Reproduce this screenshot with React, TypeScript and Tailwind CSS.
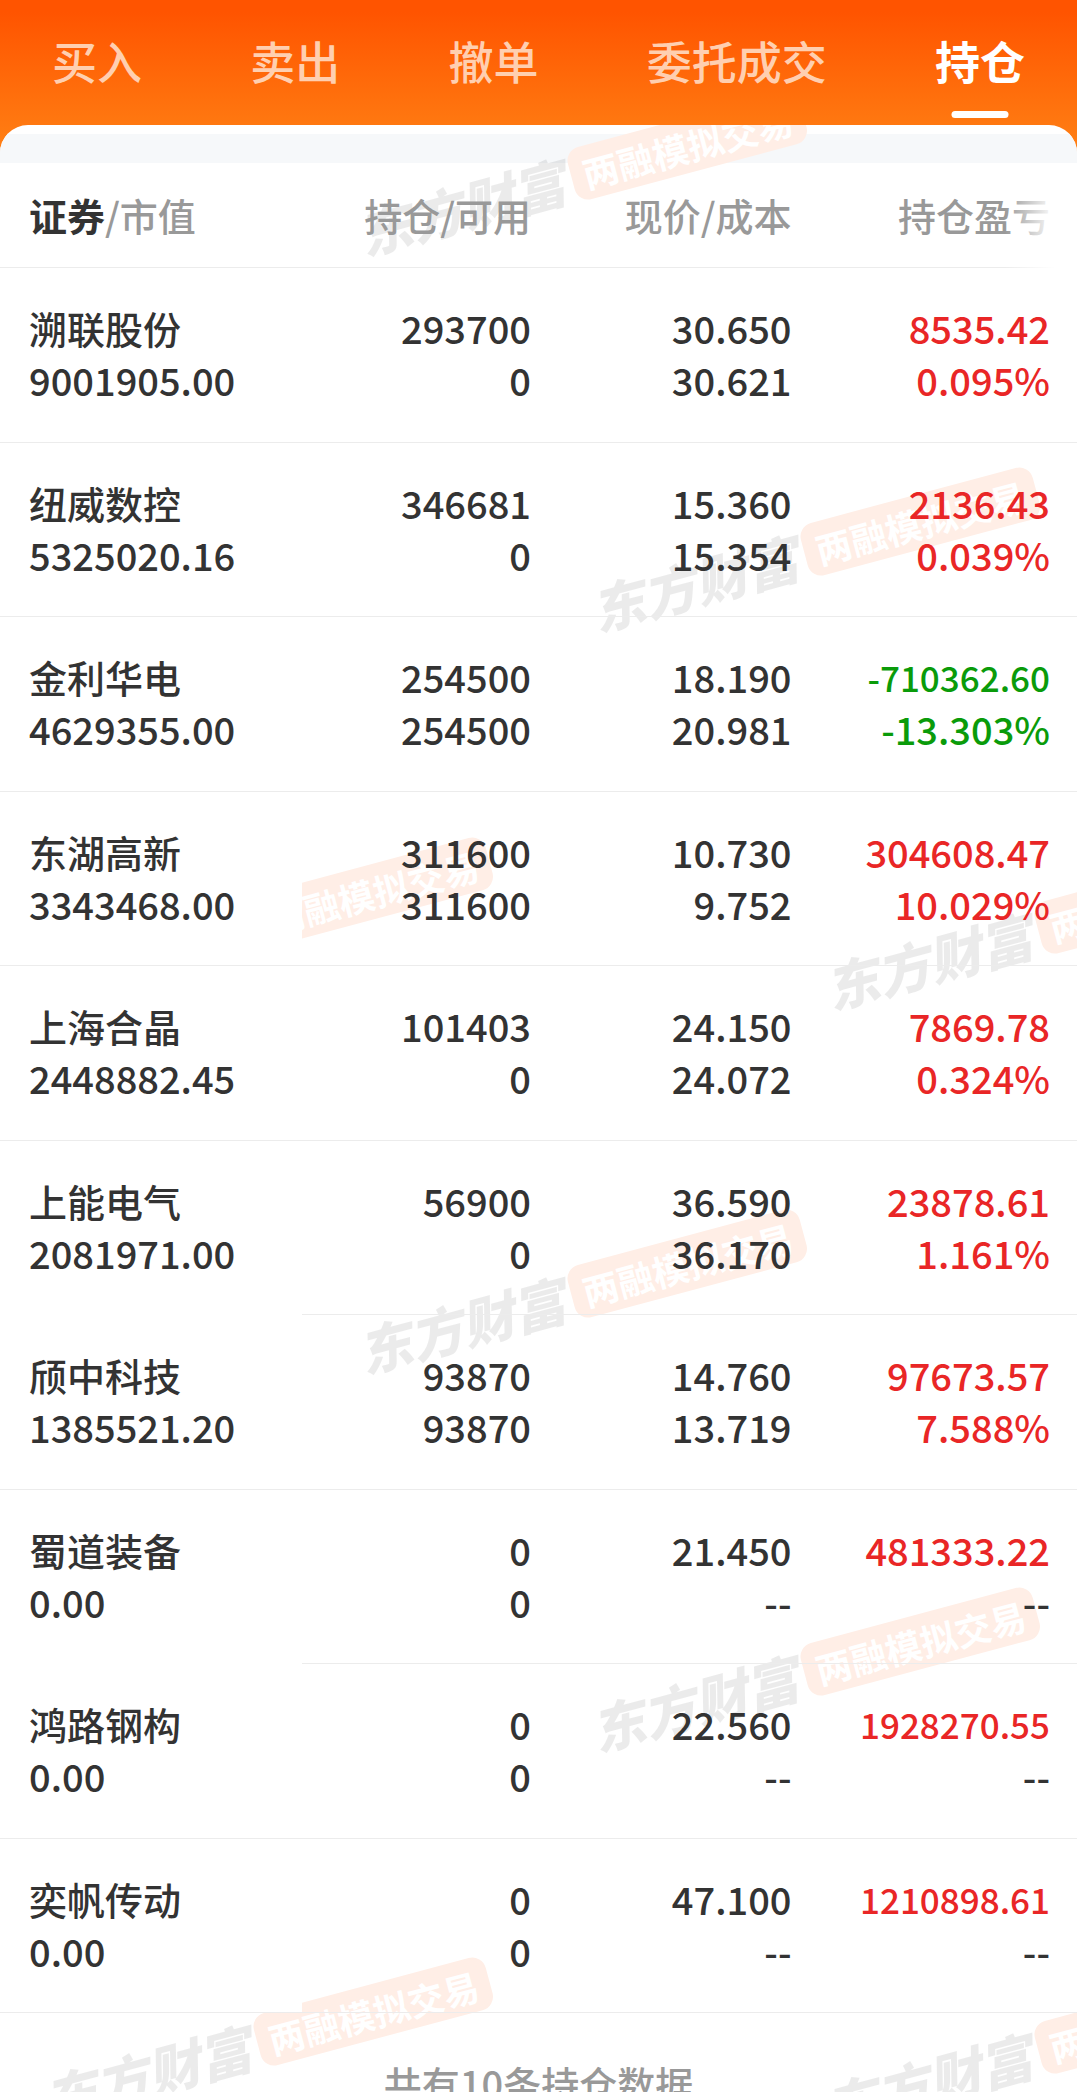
import React from "react";

const tabs = ["买入", "卖出", "撤单", "委托成交", "持仓"];

type Holding = {
  name: string;
  value: string;
  held: string;
  available: string;
  price: string;
  cost: string;
  profit: string;
  rate: string;
};

const holdings: Holding[] = [
  { name: "溯联股份", value: "9001905.00", held: "293700", available: "0", price: "30.650", cost: "30.621", profit: "8535.42", rate: "0.095%" },
  { name: "纽威数控", value: "5325020.16", held: "346681", available: "0", price: "15.360", cost: "15.354", profit: "2136.43", rate: "0.039%" },
  { name: "金利华电", value: "4629355.00", held: "254500", available: "254500", price: "18.190", cost: "20.981", profit: "-710362.60", rate: "-13.303%" },
  { name: "东湖高新", value: "3343468.00", held: "311600", available: "311600", price: "10.730", cost: "9.752", profit: "304608.47", rate: "10.029%" },
  { name: "上海合晶", value: "2448882.45", held: "101403", available: "0", price: "24.150", cost: "24.072", profit: "7869.78", rate: "0.324%" },
  { name: "上能电气", value: "2081971.00", held: "56900", available: "0", price: "36.590", cost: "36.170", profit: "23878.61", rate: "1.161%" },
  { name: "颀中科技", value: "1385521.20", held: "93870", available: "93870", price: "14.760", cost: "13.719", profit: "97673.57", rate: "7.588%" },
  { name: "蜀道装备", value: "0.00", held: "0", available: "0", price: "21.450", cost: "--", profit: "481333.22", rate: "--" },
  { name: "鸿路钢构", value: "0.00", held: "0", available: "0", price: "22.560", cost: "--", profit: "1928270.55", rate: "--" },
  { name: "奕帆传动", value: "0.00", held: "0", available: "0", price: "47.100", cost: "--", profit: "1210898.61", rate: "--" },
];

const openDivider = new Set(["上能电气", "蜀道装备"]);

function tone(text: string) {
  if (text === "--") return "text-[#333333]";
  return text.startsWith("-") ? "text-[#0a9b0a]" : "text-[#e92626]";
}

function Watermark({ className }: { className: string }) {
  return (
    <div
      className={`absolute flex -translate-x-1/2 -translate-y-1/2 -rotate-15 items-center gap-2 whitespace-nowrap ${className}`}
    >
      <span className="text-[53px] leading-none font-black text-black/8 italic">东方财富</span>
      <span className="rounded-[14px] bg-[#ffeee6] px-3 text-[36px] leading-[54px] font-bold text-white">
        两融模拟交易
      </span>
    </div>
  );
}

function HoldingRow({ item }: { item: Holding }) {
  const line = "border-[#ececec]";
  const profitSize = item.profit.length > 9 ? "text-[35px]" : "text-[38px]";
  return (
    <tr className="h-[175px] align-top even:h-[174px]">
      <th
        scope="row"
        className={`border-b bg-white pt-[34px] pl-[29px] text-left font-medium ${openDivider.has(item.name) ? "border-white" : line}`}
      >
        <div>{item.name}</div>
        <div>{item.value}</div>
      </th>
      <td className={`border-b pt-[34px] pr-[29px] ${line}`}>
        <div>{item.held}</div>
        <div>{item.available}</div>
      </td>
      <td className={`border-b pt-[34px] pr-[27px] ${line}`}>
        <div>{item.price}</div>
        <div>{item.cost}</div>
      </td>
      <td className={`border-b pt-[34px] pr-[27px] ${line}`}>
        <div className={`${profitSize} leading-[52px] ${tone(item.profit)}`}>{item.profit}</div>
        <div className={tone(item.rate)}>{item.rate}</div>
      </td>
    </tr>
  );
}

export default function App() {
  return (
    <div className="flex h-screen flex-col overflow-hidden bg-[linear-gradient(to_bottom,#ff5400_12px,#ff8014_150px)] font-['Noto_Sans_CJK_SC',sans-serif]">
      <nav role="tablist" aria-label="交易" className="flex h-[125px] shrink-0 justify-between px-[52px]">
        {tabs.map((tab) => {
          const active = tab === "持仓";
          return (
            <button
              key={tab}
              type="button"
              role="tab"
              aria-selected={active}
              className={`relative flex h-[120px] items-center text-[45px] leading-none ${active ? "font-bold text-white" : "font-medium text-[#ffcfb0]"}`}
            >
              {tab}
              {active && <span className="absolute bottom-0.5 left-1/2 h-[7px] w-[57px] -translate-x-1/2 rounded-full bg-white" />}
            </button>
          );
        })}
      </nav>

      <main className="relative flex-1 overflow-hidden rounded-t-[28px] bg-white pt-[9px] text-[38px] leading-[52px] font-medium text-[#333333]">
        <div className="h-[29px] bg-[#f6f8fa]" />

        <div aria-hidden="true" className="pointer-events-none absolute inset-0 overflow-hidden">
          <Watermark className="top-[49px] left-[581px]" />
          <Watermark className="top-[425px] left-[814px]" />
          <Watermark className="top-[795px] left-[267px]" />
          <Watermark className="top-[803px] left-[1048px]" />
          <Watermark className="top-[1167px] left-[581px]" />
          <Watermark className="top-[1545px] left-[814px]" />
          <Watermark className="top-[1915px] left-[267px]" />
          <Watermark className="top-[1923px] left-[1048px]" />
        </div>

        <table className="relative z-10 w-full table-fixed border-separate border-spacing-0 text-right">
          <colgroup>
            <col className="w-[28%]" />
            <col className="w-[24%]" />
            <col className="w-[24%]" />
            <col className="w-[24%]" />
          </colgroup>
          <thead>
            <tr className="h-[105px] text-[#999999]">
              <th scope="col" className="border-b border-[#ececec] pl-[29px] text-left font-medium">
                <span className="font-bold text-[#333333]">证券</span>/市值
              </th>
              <th scope="col" className="border-b border-[#ececec] pr-[29px] font-medium">持仓/可用</th>
              <th scope="col" className="border-b border-[#ececec] pr-[27px] font-medium">现价/成本</th>
              <th scope="col" className="relative border-b border-[#ececec] pr-[27px] font-medium">
                持仓盈亏
                <span className="absolute top-0 right-0 -bottom-px w-[72px] bg-[linear-gradient(to_right,transparent,white_50px)]" />
              </th>
            </tr>
          </thead>
          <tbody>
            {holdings.map((item) => (
              <HoldingRow key={item.name} item={item} />
            ))}
          </tbody>
        </table>

        <p className="relative z-10 pt-[44px] text-center text-[#999999]">共有10条持仓数据</p>
      </main>
    </div>
  );
}
